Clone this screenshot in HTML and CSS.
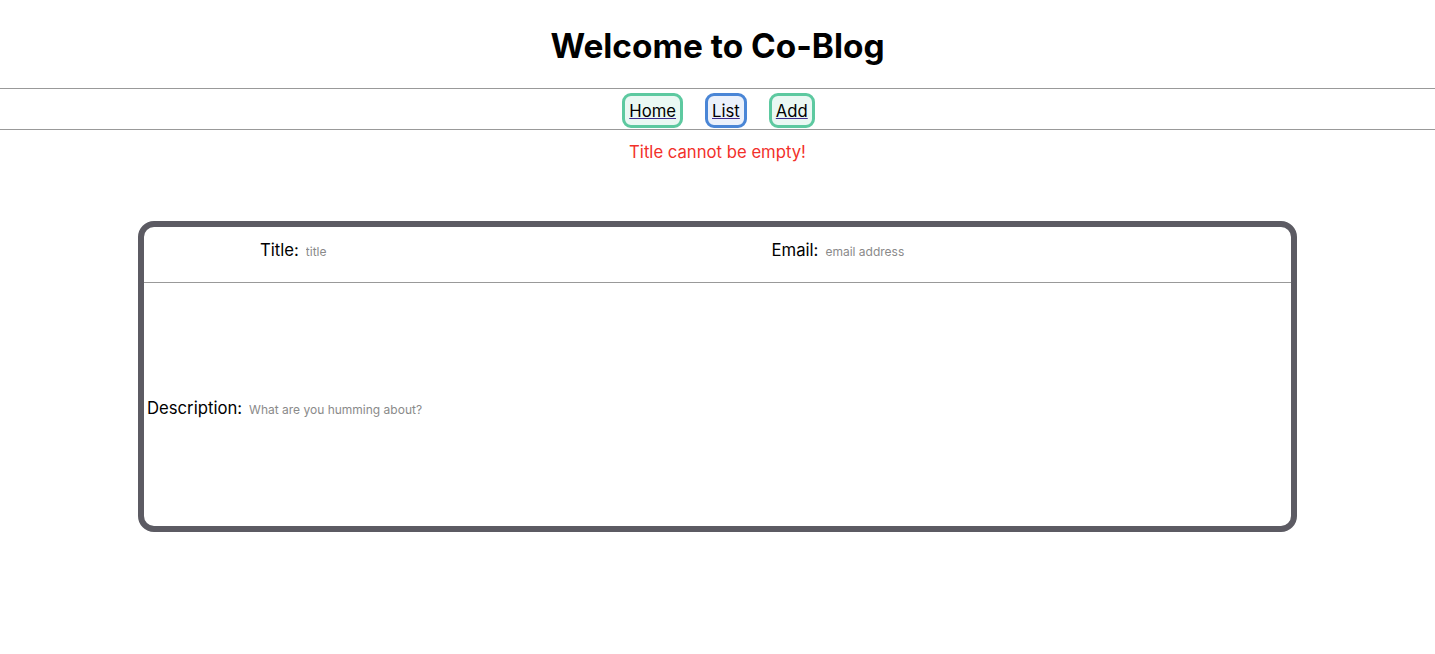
FILE: index.html
```html
<!DOCTYPE html>
<html>
<head>
<meta charset="utf-8">
<link rel="stylesheet" href="styles.css">
</head>
<body>
<header class="header">
  <h1 class="title">Welcome to Co-Blog</h1>
</header>
<nav class="nav">
  <a class="nav-link green" href="#">Home</a>
  <a class="nav-link blue" href="#">List</a>
  <a class="nav-link green" href="#">Add</a>
</nav>
<p class="error">Title cannot be empty!</p>
<form class="card">
  <div class="row">
    <div class="field field-title">
      <label class="label">Title:</label>
      <input class="input" type="text" placeholder="title">
    </div>
    <div class="field field-email">
      <label class="label">Email:</label>
      <input class="input" type="text" placeholder="email address">
    </div>
  </div>
  <div class="desc">
    <label class="label">Description:</label>
    <input class="input" type="text" placeholder="What are you humming about?">
  </div>
</form>
</body>
</html>
```
FILE: styles.css
```css
* { box-sizing: border-box; }
body {
  margin: 0;
  font-family: Inter, "Liberation Sans", Arial, sans-serif;
  color: #000;
  background: #fff;
}
.header {
  height: 89px;
  display: flex;
  align-items: center;
  justify-content: center;
  border-bottom: 1px solid #999;
}
.title {
  margin: 0;
  font-size: 33.4px;
  font-weight: 700;
  padding-top: 4px;
}
.nav {
  height: 41px;
  display: flex;
  justify-content: center;
  align-items: center;
  gap: 22px;
  border-bottom: 1px solid #999;
  padding-top: 2px;
  padding-left: 2px;
}
.nav-link {
  display: inline-block;
  color: #000;
  font-size: 16.7px;
  text-decoration: underline;
  text-decoration-color: #3a2a8a;
  padding: 6px 4px 5px;
  border: 3px solid;
  border-radius: 9px;
  line-height: 18px;
}
.nav-link.green { border-color: #5dc9a0; background: #eaf8f3; }
.nav-link.blue { border-color: #4a86d6; background: #ebf1fb; }
.error {
  margin: 12px 0 0;
  text-align: center;
  color: #f2302a;
  font-size: 16.7px;
}
.card {
  margin: 59px 138px 0 138px;
  height: 311px;
  border: 6px solid #5c5b63;
  border-radius: 16px;
  display: flex;
  flex-direction: column;
}
.row {
  height: 56px;
  display: grid;
  grid-template-columns: 1fr 1fr;
  border-bottom: 1px solid #999;
}
.field {
  display: flex;
  align-items: center;
  gap: 7px;
  padding-bottom: 10px;
}
.field-title { padding-left: 116px; }
.field-email { padding-left: 54px; }
.label {
  font-size: 16.7px;
}
.input {
  border: none;
  outline: none;
  padding: 0;
  font-family: Inter, "Liberation Sans", Arial, sans-serif;
  font-size: 12px;
  margin-top: 3px;
  width: 220px;
  background: transparent;
}
.input::placeholder { color: #8a8a8a; }
.desc {
  flex: 1;
  display: flex;
  align-items: center;
  gap: 7px;
  padding-left: 3px;
  padding-top: 6px;
}
```
